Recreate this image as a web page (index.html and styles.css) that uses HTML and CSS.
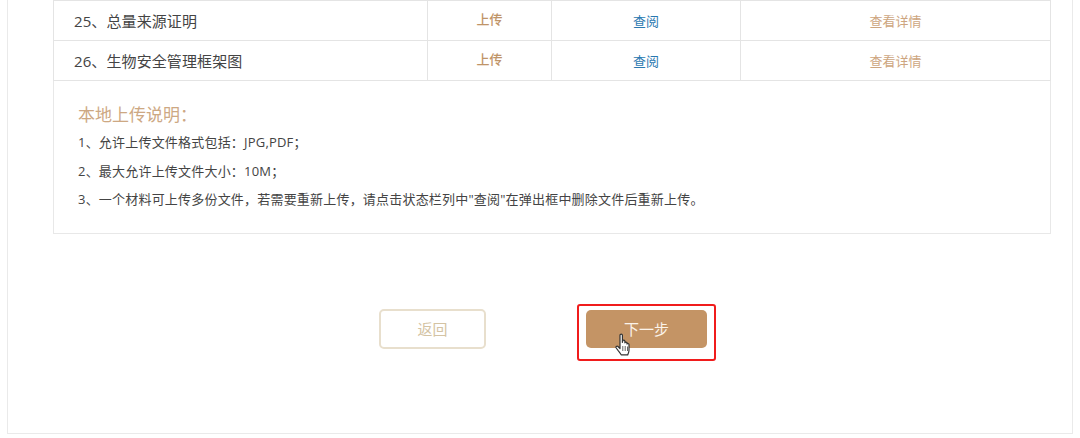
FILE: index.html
```html
<!DOCTYPE html>
<html lang="en">
<head>
  <meta charset="UTF-8">
  <title>上传材料</title>
  <link rel="stylesheet" href="styles.css">
</head>
<body>

<div class="panel">
  <!-- Materials table, scrolled to its last rows -->
  <table class="file-table">
    <tr>
      <td class="name">25、总量来源证明</td>
      <td class="upload"><a href="#">上传</a></td>
      <td class="view"><a href="#">查阅</a></td>
      <td class="detail"><a href="#">查看详情</a></td>
    </tr>
    <tr>
      <td class="name">26、生物安全管理框架图</td>
      <td class="upload"><a href="#">上传</a></td>
      <td class="view"><a href="#">查阅</a></td>
      <td class="detail"><a href="#">查看详情</a></td>
    </tr>
  </table>

  <div class="notes">
    <h3>本地上传说明：</h3>
    <p>1、允许上传文件格式包括：JPG,PDF；</p>
    <p>2、最大允许上传文件大小：10M；</p>
    <p>3、一个材料可上传多份文件，若需要重新上传，请点击状态栏列中"查阅"在弹出框中删除文件后重新上传。</p>
  </div>

  <div class="actions">
    <a href="#" class="btn btn-back">返回</a>
    <div class="highlight">
      <a href="#" class="btn btn-next">下一步</a>
      <svg class="cursor" width="18" height="26" viewBox="0 0 18 26">
        <path d="M5 2.2c0-1.500 2.400-1.500 2.400 0v7.300l.3-1.600c.3-1.200 2.100-1 2.200.3v1.600c.2-1.100 2-1 2.100.3v1c.3-1 1.900-.8 2 .5v5.300c0 2.200-.6 3.300-1.300 5H6.200c-.6-1.500-1.700-2.700-3-4.300L1.200 15c-.8-1.200.7-2.500 1.800-1.500l2 2z" fill="#fff" stroke="#333" stroke-width="1.200" stroke-linejoin="round"/>
        <path d="M7.800 13v5M10.200 13v5M12.500 13.500v4.500" fill="none" stroke="#555" stroke-width=".9"/>
      </svg>
    </div>
  </div>
</div>

</body>
</html>
```

FILE: styles.css
```css
body {
  margin: 0;
  background: #fff;
  font-family: "Open Sans", "Noto Sans CJK SC", sans-serif;
  color: #444;
  overflow: hidden;
}

a {
  text-decoration: none;
}

.panel {
  box-sizing: border-box;
  width: 1066px;
  height: 434px;
  margin-left: 7px;
  padding: 0 21px 0 45px;
  border: 1px solid #eaeaea;
  border-top: none;
}

.file-table {
  width: 998px;
  border-collapse: collapse;
  table-layout: fixed;
}

.file-table td {
  height: 39px;
  padding: 0;
  border: 1px solid #e4e4e4;
  font-size: 13px;
  text-align: center;
}

.file-table td.name {
  width: 374px;
  padding-left: 20px;
  box-sizing: border-box;
  font-size: 15px;
  letter-spacing: .1px;
  text-align: left;
}

.upload {
  width: 123px;
}

.upload a {
  position: relative;
  top: -2px;
  color: #bf9468;
  font-weight: 500;
}

.view {
  width: 188px;
}

.view a {
  color: #2a78b0;
}

.detail a {
  color: #cda580;
}

.notes {
  box-sizing: border-box;
  width: 998px;
  height: 153px;
  padding: 21px 24px 0;
  border: 1px solid #e8e8e8;
  border-top: none;
}

.notes h3 {
  margin: 0;
  font-size: 17px;
  line-height: 26px;
  font-weight: 400;
  color: #cda883;
}

.notes p {
  margin: 0;
  font-size: 13px;
  line-height: 28.5px;
  letter-spacing: .2px;
}

.actions {
  display: flex;
  align-items: flex-start;
  justify-content: center;
  gap: 91px;
  margin-top: 70px;
  padding-right: 9px;
}

.btn {
  display: block;
  box-sizing: border-box;
  text-align: center;
  font-size: 15px;
  border-radius: 5px;
}

.btn-back {
  width: 107px;
  height: 40px;
  margin-top: 5px;
  line-height: 36px;
  border: 2px solid #e8dfcd;
  color: #d4c3a3;
}

.highlight {
  position: relative;
  padding: 4px 7px 11px 7px;
  border: 2px solid #f01c1c;
  border-radius: 3px;
}

.btn-next {
  width: 121px;
  height: 38px;
  line-height: 38px;
  background: #c49465;
  color: #fbf3ea;
}

.cursor {
  position: absolute;
  left: 36px;
  top: 27px;
}
```
